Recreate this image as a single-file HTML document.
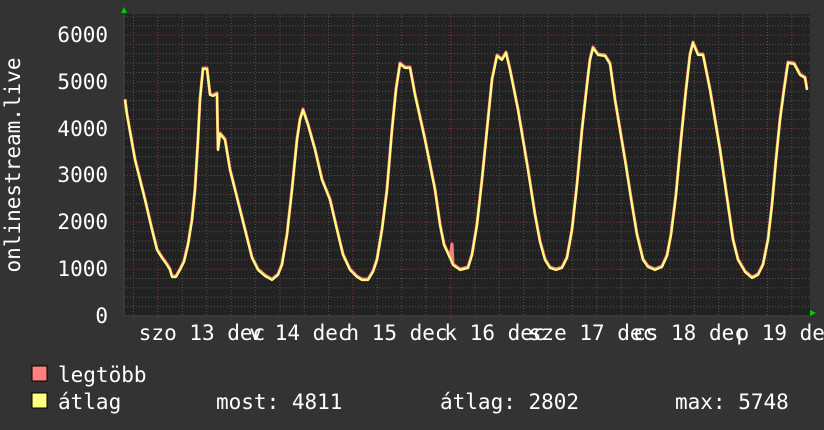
<!DOCTYPE html>
<html><head><meta charset="utf-8"><style>
html,body{margin:0;padding:0;background:#333;}
svg{display:block;}
text{font-family:"DejaVu Sans Mono","Liberation Mono",monospace;font-size:21px;fill:#fff;}
</style></head><body>
<svg width="824" height="430" viewBox="0 0 824 430" xmlns="http://www.w3.org/2000/svg">
<rect width="824" height="430" fill="#333"/>
<rect x="124" y="14" width="686" height="302" fill="#222"/>
<g stroke="#555" stroke-width="1" stroke-dasharray="1,2">
<path d="M124 306.6H810M124 297.3H810M124 287.9H810M124 278.5H810M124 259.8H810M124 250.4H810M124 241H810M124 231.7H810M124 213H810M124 203.6H810M124 194.2H810M124 184.9H810M124 166.1H810M124 156.8H810M124 147.4H810M124 138H810M124 119.3H810M124 109.9H810M124 100.6H810M124 91.2H810M124 72.5H810M124 63.1H810M124 53.7H810M124 44.4H810M124 25.7H810M124 16.3H810"/>
<path d="M133.6 14V316M182.4 14V316M206.8 14V316M231.2 14V316M279.9 14V316M304.3 14V316M328.7 14V316M377.4 14V316M401.8 14V316M426.2 14V316M474.9 14V316M499.3 14V316M523.7 14V316M572.4 14V316M596.8 14V316M621.2 14V316M669.9 14V316M694.3 14V316M718.7 14V316M767.4 14V316M791.8 14V316"/>
</g>
<g stroke="#8a3a3a" stroke-width="1" stroke-dasharray="1,2">
<path d="M124 269.1H810M124 222.3H810M124 175.5H810M124 128.7H810M124 81.9H810M124 35.1H810"/>
<path d="M158 14V320M255.5 14V320M353 14V320M450.5 14V320M548 14V320M645.5 14V320M743 14V320"/>
</g>
<path d="M124 316H810M124 14V316" stroke="#444" stroke-width="1"/>
<polygon points="121,13 124,7 127,13" fill="#0c0"/>
<polygon points="810,310 816,313 810,316" fill="#0c0"/>
<g fill="none" stroke-linejoin="round">
<polyline stroke="#ff7f7f" stroke-width="3" transform="translate(0,-1)" points="125,100 127,115 135,160 145,200 152,230 157,250 162,258 167,265 170,270 172,277 176,277 180,270 184,262 188,245 192,220 195,190 198,140 200,100 203,69 207,69 210,95 213,96 217,94 218,150 220,134 225,140 230,170 240,210 247,238 252,258 258,270 265,276 272,280 278,275 282,265 287,235 292,190 297,140 300,120 303,110 308,125 315,150 322,180 330,200 337,230 343,255 350,270 357,277 362,280 368,280 373,272 377,260 382,230 387,190 392,130 396,90 400,64 405,68 410,68 415,95 425,140 435,190 440,225 444,245 450,258 452,245 453,265 460,270 468,268 472,255 477,225 482,180 487,130 492,80 497,56 502,60 506,53 510,70 518,110 528,170 535,215 540,242 545,260 550,268 556,270 562,268 567,258 572,230 577,185 582,130 587,85 590,60 593,48 598,55 605,56 610,64 615,100 625,160 632,205 637,235 643,260 648,267 655,270 662,267 667,256 671,235 676,195 681,140 686,90 690,55 693,43 698,55 703,55 710,90 720,150 728,205 733,240 738,260 745,272 752,278 758,275 763,265 768,240 772,205 776,160 780,120 784,90 788,63 794,64 800,75 805,78 807,90"/>
<polyline stroke="#ffff80" stroke-width="2.2" points="125,100 127,115 135,160 145,200 152,230 157,250 162,258 167,265 170,270 172,277 176,277 180,270 184,262 188,245 192,220 195,190 198,140 200,100 203,69 207,69 210,95 213,96 217,94 218,150 220,134 225,140 230,170 240,210 247,238 252,258 258,270 265,276 272,280 278,275 282,265 287,235 292,190 297,140 300,120 303,110 308,125 315,150 322,180 330,200 337,230 343,255 350,270 357,277 362,280 368,280 373,272 377,260 382,230 387,190 392,130 396,90 400,64 405,68 410,68 415,95 425,140 435,190 440,225 444,245 450,258 453,265 460,270 468,268 472,255 477,225 482,180 487,130 492,80 497,56 502,60 506,53 510,70 518,110 528,170 535,215 540,242 545,260 550,268 556,270 562,268 567,258 572,230 577,185 582,130 587,85 590,60 593,48 598,55 605,56 610,64 615,100 625,160 632,205 637,235 643,260 648,267 655,270 662,267 667,256 671,235 676,195 681,140 686,90 690,55 693,43 698,55 703,55 710,90 720,150 728,205 733,240 738,260 745,272 752,278 758,275 763,265 768,240 772,205 776,160 780,120 784,90 788,63 794,64 800,75 805,78 807,90"/>
</g>
<g text-anchor="end">
<text x="108" y="42">6000</text><text x="108" y="89">5000</text><text x="108" y="136">4000</text>
<text x="108" y="182">3000</text><text x="108" y="229">2000</text><text x="108" y="276">1000</text>
<text x="108" y="323">0</text>
</g>
<text transform="translate(20,165) rotate(-90)" text-anchor="middle">onlinestream.live</text>
<g text-anchor="middle">
<text x="202" y="340">szo 13 dec</text><text x="300" y="340">v 14 dec</text>
<text x="397" y="340">h 15 dec</text><text x="495" y="340">k 16 dec</text>
<text x="592" y="340">sze 17 dec</text><text x="690" y="340">cs 18 dec</text>
<text x="787" y="340">p 19 dec</text>
</g>
<rect x="32" y="366" width="15" height="15" fill="#ff8080" stroke="#000"/>
<rect x="32" y="393" width="15" height="15" fill="#ffff80" stroke="#000"/>
<text x="58" y="382">legtöbb</text>
<text x="58" y="409">átlag</text>
<text x="216" y="409">most: 4811</text>
<text x="440" y="409">átlag: 2802</text>
<text x="675" y="409">max: 5748</text>
</svg>
</body></html>
